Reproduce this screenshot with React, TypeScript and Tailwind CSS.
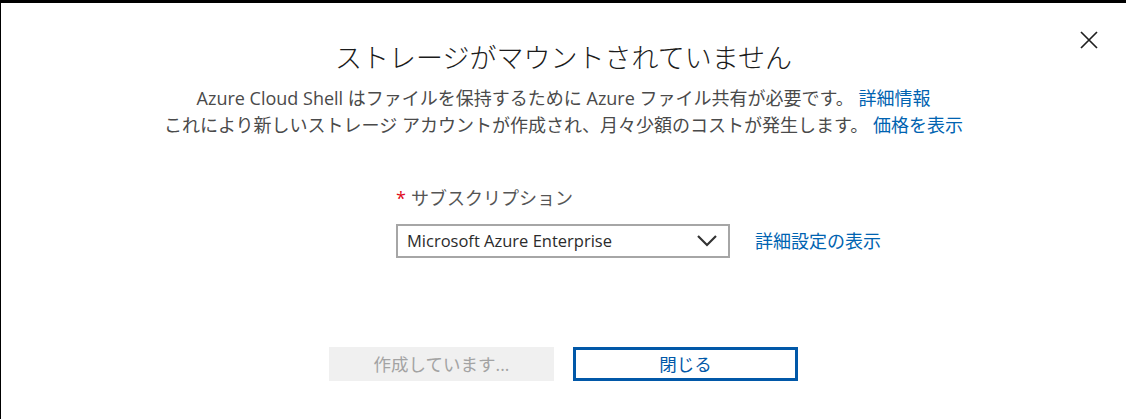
const jp = { fontFamily: '"Open Sans", "Noto Sans CJK JP", sans-serif' };

export default function App() {
    return (
        <div className="relative h-[419px] w-[1126px] overflow-hidden border-t-[3px] border-l border-black bg-white" style={jp}>
            <button className="absolute right-[27px] top-[27px] text-[#1f1f1f]">
                <svg width="20" height="20" viewBox="0 0 20 20">
                    <path d="M2 2 L18 18 M18 2 L2 18" fill="none" stroke="currentColor" strokeWidth="1.7" />
                </svg>
            </button>

            <div className="flex flex-col items-center pt-[36px]">
                <h1 className="text-[27px] font-light leading-[38px] text-[#1b1b1b]">ストレージがマウントされていません</h1>

                <div className="mt-[8px] text-center text-[18px] leading-[27px] text-[#4a4a4a]">
                    <p>
                        Azure Cloud Shell はファイルを保持するために Azure ファイル共有が必要です。{" "}
                        <a className="text-[#0063b1]">詳細情報</a>
                    </p>
                    <p>
                        これにより新しいストレージ アカウントが作成され、月々少額のコストが発生します。{" "}
                        <a className="text-[#0063b1]">価格を表示</a>
                    </p>
                </div>

                {/* subscription picker */}
                <div className="mt-[47px] flex flex-col self-stretch pl-[395px]">
                    <label className="flex items-center text-[18px] leading-[24px] text-[#555]">
                        <span className="mr-[5px] text-[#e00b1c]">*</span>
                        サブスクリプション
                    </label>
                    <div className="mt-[14px] flex items-center gap-[25px]">
                        <div className="flex h-[34px] w-[334px] items-center justify-between border-2 border-[#a6a6a6] pl-[9px] pr-[10px]">
                            <span className="text-[16.5px] text-[#2b2b2b]">Microsoft Azure Enterprise</span>
                            <svg width="22" height="14" viewBox="0 0 22 14" className="text-[#333]">
                                <path d="M2 2 L11 11 L20 2" fill="none" stroke="currentColor" strokeWidth="2.2" />
                            </svg>
                        </div>
                        <a className="text-[18px] text-[#0063b1]">詳細設定の表示</a>
                    </div>
                </div>

                <div className="mt-[89px] flex gap-[19px]">
                    <button className="h-[34px] w-[225px] bg-[#f0f0f0] text-[17.5px] text-[#a3a3a3]">作成しています...</button>
                    <button className="h-[34px] w-[225px] border-[3px] border-[#0158a8] text-[17.5px] text-[#0158a8]">閉じる</button>
                </div>
            </div>
        </div>
    );
}
